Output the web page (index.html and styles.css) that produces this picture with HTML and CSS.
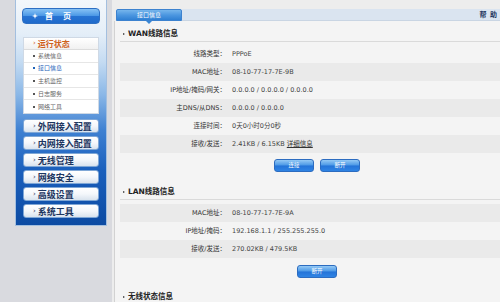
FILE: index.html
```html
<!DOCTYPE html>
<html lang="zh-CN">
<head>
<meta charset="utf-8">
<title>接口信息</title>
<link rel="stylesheet" href="styles.css">
</head>
<body>
<div class="page">
  <aside class="side">
    <div class="panel">
      <div class="home">
        <svg class="star" width="6" height="6" viewBox="0 0 6 6"><path d="M3 0 L3.7 2.3 L6 3 L3.7 3.7 L3 6 L2.3 3.7 L0 3 L2.3 2.3 Z" fill="#fff"/></svg>
        <span class="home-text">首　页</span>
      </div>
      <div class="sub">
        <div class="sub-head"><span class="arr">›</span>运行状态</div>
        <ul class="sub-list">
          <li>系统信息</li>
          <li class="on">接口信息</li>
          <li>主机监控</li>
          <li>日志服务</li>
          <li>网络工具</li>
        </ul>
      </div>
      <ul class="menu">
        <li><span class="arr">›</span>外网接入配置</li>
        <li><span class="arr">›</span>内网接入配置</li>
        <li><span class="arr">›</span>无线管理</li>
        <li><span class="arr">›</span>网络安全</li>
        <li><span class="arr">›</span>高级设置</li>
        <li><span class="arr">›</span>系统工具</li>
      </ul>
    </div>
  </aside>
  <main class="main">
    <div class="topbar">
      <div class="tab">接口信息</div>
      <span class="help">帮 助</span>
    </div>
    <div class="content">
      <section class="sec">
        <h2 class="sec-head"><span class="tri"></span>WAN线路信息</h2>
        <div class="rows">
          <div class="row"><span class="lbl">线路类型：</span><span class="val">PPPoE</span></div>
          <div class="row alt"><span class="lbl">MAC地址：</span><span class="val">08-10-77-17-7E-9B</span></div>
          <div class="row"><span class="lbl">IP地址/掩码/网关：</span><span class="val">0.0.0.0 / 0.0.0.0 / 0.0.0.0</span></div>
          <div class="row alt"><span class="lbl">主DNS/从DNS：</span><span class="val">0.0.0.0 / 0.0.0.0</span></div>
          <div class="row"><span class="lbl">连接时间：</span><span class="val">0天0小时0分0秒</span></div>
          <div class="row alt"><span class="lbl">接收/发送：</span><span class="val">2.41KB / 6.15KB <a class="link">详细信息</a></span></div>
        </div>
        <div class="btns">
          <span class="btn">连接</span>
          <span class="btn">断开</span>
        </div>
      </section>
      <section class="sec sec-lan">
        <h2 class="sec-head"><span class="tri"></span>LAN线路信息</h2>
        <div class="rows rows-lan">
          <div class="row alt"><span class="lbl">MAC地址：</span><span class="val">08-10-77-17-7E-9A</span></div>
          <div class="row"><span class="lbl">IP地址/掩码：</span><span class="val">192.168.1.1 / 255.255.255.0</span></div>
          <div class="row alt"><span class="lbl">接收/发送：</span><span class="val">270.02KB / 479.5KB</span></div>
        </div>
        <div class="btns btns-lan">
          <span class="btn">断开</span>
        </div>
      </section>
      <section class="sec sec-wl">
        <h2 class="sec-head"><span class="tri"></span>无线状态信息</h2>
      </section>
    </div>
  </main>
</div>
</body>
</html>
```
FILE: styles.css
```css
html, body {
  margin: 0;
  padding: 0;
}
body {
  width: 500px;
  height: 302px;
  overflow: hidden;
  background: #d9dadf;
  font-family: "DejaVu Sans", "Noto Sans CJK SC", sans-serif;
}
ul {
  list-style: none;
  margin: 0;
  padding: 0;
}
.page {
  display: flex;
  height: 302px;
}

/* ---------- sidebar ---------- */
.side {
  width: 112px;
  flex: none;
  padding-left: 15px;
  box-sizing: border-box;
}
.panel {
  width: 92px;
  height: 226px;
  box-sizing: border-box;
  border: 1px solid #a3bfdf;
  border-top: none;
  padding: 8px 6px 0 6px;
  background: linear-gradient(to bottom,
    #f3f7fb 0,
    #e4eef8 34px,
    #c4dbf2 62px,
    #8ab7e7 95px,
    #3f81d2 130px,
    #1b60bd 170px,
    #0c4aa2 226px);
}
.home {
  height: 16px;
  box-sizing: border-box;
  border: 1px solid #2d6fc3;
  border-radius: 4px;
  background: linear-gradient(to bottom, #86c2f5 0, #4b98e6 48%, #2673d3 52%, #1f6acb 100%);
  display: flex;
  align-items: center;
  padding-left: 9px;
  color: #fff;
}
.star {
  flex: none;
  display: block;
}
.home-text {
  margin-left: 7px;
  font-family: "Noto Sans CJK SC", sans-serif;
  font-weight: bold;
  font-size: 8px;
  line-height: 1;
  letter-spacing: 1px;
}
.sub {
  margin: 13px 0 0 1px;
  width: 76px;
  height: 77px;
  box-sizing: border-box;
  background: #fff;
  border: 1px solid #cfd9e5;
}
.sub-head {
  height: 12px;
  box-sizing: border-box;
  border-bottom: 1px solid #dcdcdc;
  background: linear-gradient(to bottom, #ffffff, #f1f1f1);
  padding-left: 9px;
  display: flex;
  align-items: center;
  font-family: "Noto Sans CJK SC", sans-serif;
  font-weight: bold;
  font-size: 8px;
  color: #cf611c;
  line-height: 1;
}
.arr {
  font-family: "DejaVu Sans", sans-serif;
  font-weight: normal;
  font-size: 7px;
  margin-right: 2px;
}
.sub-list li {
  height: 12.6px;
  box-sizing: border-box;
  border-bottom: 1px solid #e6e6e6;
  padding-left: 9px;
  display: flex;
  align-items: center;
  font-family: "Noto Sans CJK SC", sans-serif;
  font-size: 6px;
  color: #666;
  line-height: 1;
}
.sub-list li:last-child {
  border-bottom: none;
}
.sub-list li::before {
  content: "";
  width: 2px;
  height: 2px;
  background: #555;
  margin-right: 3px;
  flex: none;
}
.sub-list li.on {
  color: #1d62b8;
}
.sub-list li.on::before {
  background: #1d62b8;
}
.menu {
  margin: 5px 0 0 1px;
  width: 76px;
}
.menu li {
  height: 14px;
  box-sizing: border-box;
  margin-bottom: 3px;
  border: 1px solid #7fa7d6;
  border-radius: 3px;
  background: linear-gradient(to bottom, #ffffff 0, #f4f7fb 50%, #d9e3ee 100%);
  padding-left: 9px;
  display: flex;
  align-items: center;
  font-family: "Noto Sans CJK SC", sans-serif;
  font-weight: bold;
  font-size: 9px;
  color: #1d3660;
  line-height: 1;
}

/* ---------- main ---------- */
.main {
  flex: 1;
  min-width: 0;
  display: flex;
  flex-direction: column;
  background: #ededed;
}
.topbar {
  margin-top: 9px;
  margin-left: 4px;
  height: 11px;
  background: #dae4f0;
  border-bottom: 1px solid #c9d5e3;
  display: flex;
  align-items: flex-start;
  flex: none;
}
.tab {
  position: relative;
  width: 66px;
  height: 12px;
  box-sizing: border-box;
  border: 1px solid #3c82cf;
  border-radius: 2px 2px 0 0;
  background: linear-gradient(to bottom, #76b5ec 0, #4c97e0 50%, #2f7fd3 100%);
  color: #fff;
  font-family: "Noto Sans CJK SC", sans-serif;
  font-size: 6px;
  line-height: 10px;
  text-align: center;
  z-index: 2;
}
.tab::after {
  content: "";
  position: absolute;
  left: 29px;
  top: 11px;
  border-left: 3px solid transparent;
  border-right: 3px solid transparent;
  border-top: 3px solid #3a86d4;
}
.help {
  margin-left: auto;
  margin-right: 2px;
  font-family: "Noto Sans CJK SC", sans-serif;
  font-weight: bold;
  font-size: 7px;
  line-height: 11px;
  color: #1d3660;
  letter-spacing: 1px;
}
.content {
  flex: 1;
  margin-left: 2px;
  border-left: 1px solid #d2d2d2;
  background: #f4f4f4;
  padding: 5px 0 0 5px;
  overflow: hidden;
}
.sec-head {
  margin: 0;
  height: 16px;
  box-sizing: border-box;
  border-bottom: 1px solid #dadada;
  padding-left: 3px;
  display: flex;
  align-items: center;
  font-family: "DejaVu Sans", "Noto Sans CJK SC", sans-serif;
  font-weight: bold;
  font-size: 7.5px;
  color: #222;
  line-height: 1;
}
.tri {
  width: 0;
  height: 0;
  border-top: 1.5px solid transparent;
  border-bottom: 1.5px solid transparent;
  border-left: 2px solid #333;
  margin-right: 3px;
  flex: none;
}
.rows {
  margin-top: 3px;
}
.rows-lan {
  margin-top: 4px;
}
.row {
  height: 18px;
  display: grid;
  grid-template-columns: 106px 1fr;
  align-items: center;
  font-family: "DejaVu Sans", "Noto Sans CJK SC", sans-serif;
  font-size: 6.5px;
  line-height: 1;
  color: #3a3a3a;
}
.row.alt {
  background: #eaeaea;
}
.lbl {
  text-align: right;
  color: #333;
}
.val {
  padding-left: 6px;
  color: #444;
  white-space: nowrap;
}
.link {
  color: #333;
  text-decoration: underline;
}
.btns {
  margin-top: 6px;
  height: 13px;
  display: flex;
  justify-content: center;
  gap: 6px;
  padding-left: 14px;
}
.btns-lan {
  margin-top: 7px;
}
.btn {
  width: 40px;
  height: 13px;
  box-sizing: border-box;
  border: 1px solid #2c6cc0;
  border-radius: 3px;
  background: linear-gradient(to bottom, #94c9f5 0, #4b98e6 48%, #2473d8 52%, #2f84e4 100%);
  color: #fff;
  font-family: "Noto Sans CJK SC", sans-serif;
  font-size: 5.5px;
  line-height: 11px;
  text-align: center;
}
.sec-lan {
  margin-top: 12px;
}
.sec-wl {
  margin-top: 11px;
}
```
